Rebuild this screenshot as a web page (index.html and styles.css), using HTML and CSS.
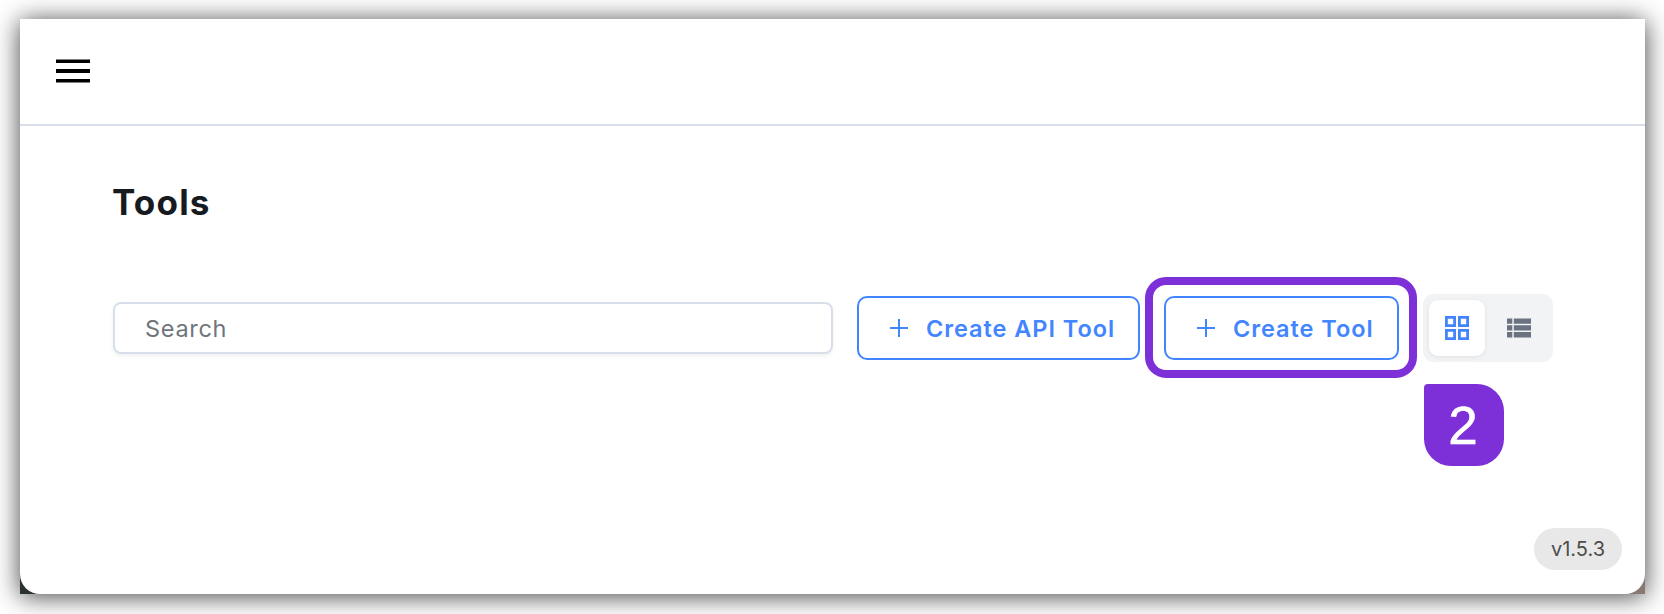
FILE: index.html
```
<!DOCTYPE html>
<html lang="en">

<head>
    <meta charset="UTF-8">
    <title>Tools</title>
    <link rel="stylesheet" href="styles.css">
</head>

<body>
    <div class="window">
        <div class="page">
            <header class="topbar">
                <button class="menu-btn" aria-label="Menu">
                    <svg width="34" height="24" viewBox="0 0 34 24">
                        <path d="M0 .4h34v3.5H0zM0 10h34v4H0zM0 19.9h34v3.6H0z" fill="#000" />
                    </svg>
                </button>
            </header>

            <main class="content">
                <h1>Tools</h1>

                <div class="toolbar">
                    <input class="search" type="text" placeholder="Search">

                    <button class="create-btn api">
                        <svg class="plus" width="18" height="18" viewBox="0 0 18 18">
                            <path d="M9 0v18M0 9h18" stroke="currentColor" stroke-width="2" />
                        </svg>
                        <span>Create API Tool</span>
                    </button>

                    <div class="highlight">
                        <button class="create-btn tool">
                            <svg class="plus" width="18" height="18" viewBox="0 0 18 18">
                                <path d="M9 0v18M0 9h18" stroke="currentColor" stroke-width="2" />
                            </svg>
                            <span>Create Tool</span>
                        </button>
                    </div>

                    <div class="view-toggle">
                        <button class="view active" aria-label="Grid view">
                            <svg width="24" height="24" viewBox="0 0 24 24">
                                <path d="M1.4 1.4h8.2v8.2H1.4zM14.4 1.4h8.2v8.2h-8.2zM1.4 14.4h8.2v8.2H1.4zM14.4 14.4h8.2v8.2h-8.2z" fill="none" stroke="currentColor" stroke-width="2.8" />
                            </svg>
                        </button>
                        <button class="view" aria-label="List view">
                            <svg width="24" height="20" viewBox="0 0 24 20">
                                <path d="M0 .6h5.3v5.2H0zM6.8.6H24v5.2H6.8zM0 7.3h5.3v5.2H0zM6.8 7.3H24v5.2H6.8zM0 14h5.3v5.4H0zM6.8 14H24v5.4H6.8z" fill="currentColor" />
                            </svg>
                        </button>
                    </div>
                </div>

                <div class="step">2</div>
            </main>

            <span class="version">v1.5.3</span>
        </div>
    </div>
</body>

</html>
```
FILE: styles.css
```
* {
    box-sizing: border-box;
}

body {
    margin: 0;
    padding: 19px 19px 20px 20px;
    height: 614px;
    overflow: hidden;
    background-color: #fff;
    font-family: Inter, sans-serif;
}

button {
    padding: 0;
    border: none;
    background: none;
    font-family: inherit;
}

svg {
    display: block;
}

.window {
    height: 575px;
    background: linear-gradient(to right, #2b3232 50%, #887a72 50%);
    box-shadow: 0 2px 24px rgba(0, 0, 0, 0.75);
}

.page {
    display: flex;
    flex-direction: column;
    height: 100%;
    background-color: #fff;
    border-radius: 0 0 20px 20px;
}

.topbar {
    display: flex;
    align-items: center;
    height: 107px;
    padding: 0 36px 2px;
    border-bottom: 2px solid #d8deea;
}

.content {
    flex: 1;
    padding: 55px 92px 0 93px;
}

h1 {
    margin: 0 0 0 -1px;
    height: 41px;
    line-height: 42px;
    font-size: 35px;
    font-weight: 700;
    letter-spacing: 1.2px;
    color: #171a1f;
}

.toolbar {
    display: flex;
    align-items: center;
    height: 102px;
    margin-top: 55px;
}

.search {
    width: 720px;
    height: 52px;
    margin-right: 24px;
    padding: 0 30px;
    border: 2px solid #d8deea;
    border-radius: 8px;
    box-shadow: 0 2px 4px rgba(0, 0, 0, 0.06);
    font-family: inherit;
    font-size: 23.5px;
    letter-spacing: 0.7px;
}

.search::placeholder {
    color: #6f757d;
    opacity: 1;
}

.create-btn {
    display: flex;
    align-items: center;
    height: 64px;
    padding-left: 31px;
    border: 2px solid #4285ff;
    border-radius: 10px;
    color: #4285ff;
    font-size: 23.5px;
    font-weight: 600;
    letter-spacing: 0.95px;
    white-space: nowrap;
}

.create-btn .plus {
    flex: none;
    margin-right: 18px;
}

.api {
    width: 283px;
}

.tool {
    width: 235px;
}

.highlight {
    align-self: flex-start;
    width: 272px;
    height: 101px;
    margin-left: 5px;
    padding: 11px;
    border: 8px solid #7e30d8;
    border-radius: 21px;
}

.view-toggle {
    display: flex;
    gap: 6px;
    width: 130px;
    height: 68px;
    margin-left: 6px;
    padding: 6px;
    border-radius: 11px;
    background-color: #f2f3f5;
}

.view {
    display: flex;
    align-items: center;
    justify-content: center;
    width: 56px;
    height: 56px;
    border-radius: 9px;
    color: #6b7280;
}

.view.active {
    background-color: #fff;
    box-shadow: 0 1px 4px rgba(0, 0, 0, 0.08);
    color: #4285ff;
}

.step {
    width: 80px;
    height: 82px;
    margin: 5px 49px 0 auto;
    padding-right: 2px;
    border-radius: 4px 27px 27px 27px;
    background-color: #7e30d8;
    color: #fff;
    font-family: "Liberation Sans", Arial, sans-serif;
    font-size: 53px;
    line-height: 84px;
    text-align: center;
    -webkit-text-stroke: 0.6px #fff;
}

.version {
    align-self: flex-end;
    width: 88px;
    height: 42px;
    margin: 0 23px 24px 0;
    border-radius: 21px;
    background-color: #e8e8e8;
    color: #4d4d4d;
    font-size: 20px;
    line-height: 42px;
    text-align: center;
}
```
